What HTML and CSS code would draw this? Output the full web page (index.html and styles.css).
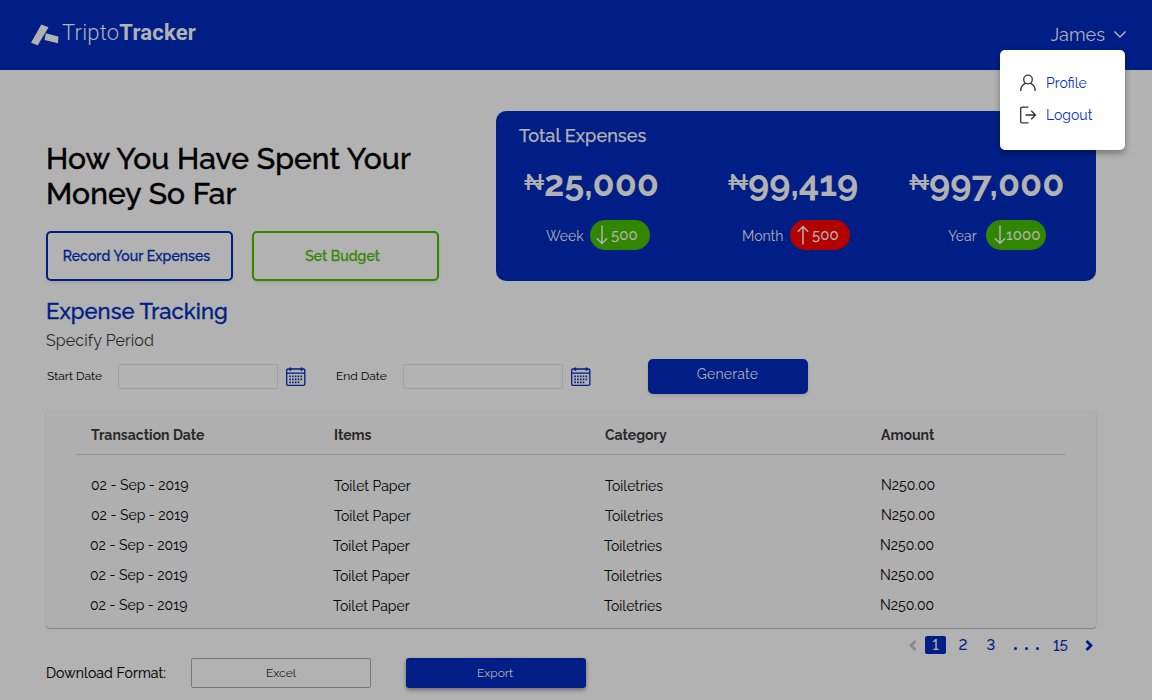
FILE: index.html
```html
<!DOCTYPE html>
<html lang="en">
<head>
<meta charset="utf-8">
<title>TriptoTracker</title>
<link rel="stylesheet" href="styles.css">
</head>
<body>
<svg class="defs" width="0" height="0" aria-hidden="true">
  <symbol id="calendar" viewBox="0 0 20 20">
    <path d="M.7 3.2Q.7 2 1.9 2H17.6Q18.8 2 18.8 3.2V17.2Q18.8 18.3 17.6 18.3H1.9Q.7 18.3 .7 17.2ZM.7 6.2H19" fill="none" stroke="currentColor" stroke-width="1.3"/>
    <path d="M4.3 .5V3.8M15.5 .5V3.8" stroke="currentColor" stroke-width="1.8"/>
    <path d="M3.3 9.4H16.8M3.3 12.4H16.8M3.3 15.4H14" stroke="currentColor" stroke-width="1.6" stroke-dasharray="1.6 1.2"/>
  </symbol>
  <symbol id="arrow" viewBox="0 0 12 20">
    <path d="M6 .5V18.5M.8 13.2L6 18.5L11.2 13.2" fill="none" stroke="currentColor" stroke-width="1.5"/>
  </symbol>
</svg>
<header class="topbar">
  <div class="brand">
    <svg class="mark" width="28" height="22" viewBox="0 0 28 22"><path d="M10.3 0.4L17.6 3.2L6.8 21.3L0 18.8ZM14.8 9.2L27.4 12.5L27 19.2L13.5 16Z" fill="currentColor"/></svg>
    <span class="name">Tripto<b>Tracker</b></span>
  </div>
  <div class="account">
    <span class="user">James</span>
    <svg width="14" height="9" viewBox="0 0 14 9"><path d="M1.5 1.5L7 7L12.5 1.5" fill="none" stroke="currentColor" stroke-width="1.5"/></svg>
    <nav class="menu">
      <a class="item"><svg width="18" height="18" viewBox="0 0 18 18" fill="none" stroke="currentColor" stroke-width="1.3"><circle cx="8" cy="5.5" r="4.3"/><path d="M.7 17C.7 12.5 3.3 9.7 5.8 9.3M15.3 17C15.3 12.5 12.7 9.7 10.2 9.3"/></svg><span>Profile</span></a>
      <a class="item"><svg width="18" height="18" viewBox="0 0 18 18" fill="none" stroke="currentColor" stroke-width="1.3"><path d="M8.5 1.2H2Q.7 1.2 .7 2.5V15.5Q.7 16.8 2 16.8H8.5M5.5 9H15.5M11.2 4.8L15.5 9L11.2 13.2"/></svg><span>Logout</span></a>
    </nav>
  </div>
</header>
<main class="page">
  <section class="hero">
    <div class="intro">
      <h1 class="headline">How You Have Spent Your<br>Money So Far</h1>
      <div class="actions">
        <button class="outline blue">Record Your Expenses</button>
        <button class="outline green">Set Budget</button>
      </div>
    </div>
    <div class="card">
      <h2 class="card-title">Total Expenses</h2>
      <div class="stats">
        <div class="stat week">
          <div class="amount"><span class="naira">₦</span>25,000</div>
          <div class="change"><span class="period">Week</span><span class="pill"><svg width="12" height="20"><use href="#arrow"/></svg>500</span></div>
        </div>
        <div class="stat month">
          <div class="amount"><span class="naira">₦</span>99,419</div>
          <div class="change"><span class="period">Month</span><span class="pill up"><svg width="12" height="20"><use href="#arrow"/></svg>500</span></div>
        </div>
        <div class="stat year">
          <div class="amount"><span class="naira">₦</span>997,000</div>
          <div class="change"><span class="period">Year</span><span class="pill wide"><svg width="12" height="20"><use href="#arrow"/></svg>1000</span></div>
        </div>
      </div>
    </div>
  </section>
  <h2 class="section-title">Expense Tracking</h2>
  <p class="subtitle">Specify Period</p>
  <form class="filters">
    <label class="label start">Start Date</label><input class="date"><svg class="cal" width="20" height="20"><use href="#calendar"/></svg>
    <label class="label end">End Date</label><input class="date"><svg class="cal" width="20" height="20"><use href="#calendar"/></svg>
    <button class="generate" type="button">Generate</button>
  </form>
  <section class="panel">
    <div class="row head"><span>Transaction Date</span><span>Items</span><span>Category</span><span>Amount</span></div>
    <div class="rows">
      <div class="row"><span>02 - Sep - 2019</span><span class="low">Toilet Paper</span><span class="low">Toiletries</span><span>N250.00</span></div>
      <div class="row"><span>02 - Sep - 2019</span><span class="low">Toilet Paper</span><span class="low">Toiletries</span><span>N250.00</span></div>
      <div class="row shift"><span>02 - Sep - 2019</span><span class="low">Toilet Paper</span><span class="low">Toiletries</span><span>N250.00</span></div>
      <div class="row shift"><span>02 - Sep - 2019</span><span class="low">Toilet Paper</span><span class="low">Toiletries</span><span>N250.00</span></div>
      <div class="row shift"><span>02 - Sep - 2019</span><span class="low">Toilet Paper</span><span class="low">Toiletries</span><span>N250.00</span></div>
    </div>
  </section>
  <nav class="pager">
    <svg class="prev" width="8" height="11" viewBox="0 0 8 11"><path d="M6.5 1L2 5.5L6.5 10" fill="none" stroke="currentColor" stroke-width="2.6"/></svg>
    <span class="current">1</span><span class="num">2</span><span class="num">3</span>
    <span class="dots"><i></i><i></i><i></i></span>
    <span class="last">15</span>
    <svg class="next" width="8" height="11" viewBox="0 0 8 11"><path d="M1.5 1L6 5.5L1.5 10" fill="none" stroke="currentColor" stroke-width="2.8"/></svg>
  </nav>
  <div class="download">
    <span class="dl-label">Download Format:</span>
    <button class="format">Excel</button>
    <button class="export">Export</button>
  </div>
</main>
</body>
</html>
```
FILE: styles.css
```css
* { box-sizing: border-box; }
body { margin: 0; background: #b2b2b2; color: #000; font-family: Raleway, Lato, sans-serif; font-variant-numeric: oldstyle-nums; height: 700px; overflow: hidden; white-space: nowrap; }
h1, h2, p { margin: 0; }
button { font-family: inherit; padding: 0; border: 0; background: none; }
svg { display: block; flex: none; }
.defs { position: absolute; }
.topbar { height: 70px; background: #001e86; color: #b2b2b2; display: flex; justify-content: space-between; padding: 0 25px 0 31px; }
.brand { display: flex; align-items: flex-start; padding-top: 20px; }
.mark { margin-top: 4px; }
.name { font: 300 22px/26px Roboto, sans-serif; margin-left: 3px; letter-spacing: .2px; }
.name b { font-weight: 700; letter-spacing: .2px; }
.account { position: relative; display: flex; align-items: center; height: 68px; gap: 8px; }
.user { font-size: 18px; letter-spacing: .1px; }
.menu { position: absolute; right: 2px; top: 50px; width: 125px; height: 100px; padding: 17px 20px; background: #fff; border-radius: 5px; box-shadow: 0 3px 6px rgba(0,0,0,.35); color: #333; z-index: 2; }
.item { display: flex; align-items: center; gap: 8px; height: 32px; font-size: 14px; }
.item span { color: #0030c8; }
.page { padding: 41px 56px 0 46px; }
.hero { display: flex; justify-content: space-between; height: 170px; }
.intro { display: flex; flex-direction: column; justify-content: space-between; padding-top: 30px; }
.headline { font-size: 30px; line-height: 35px; font-weight: 500; letter-spacing: .11px; -webkit-text-stroke: .45px currentColor; }
.actions { display: flex; gap: 19px; }
.outline { width: 187px; height: 50px; border: 2px solid currentColor; border-radius: 5px; font-size: 14px; font-weight: 500; letter-spacing: .08px; -webkit-text-stroke: .3px currentColor; box-shadow: 0 2px 3px rgba(0,0,0,.08); padding-right: 6px; }
.blue { color: #001e86; }
.green { color: #318600; }
.card { width: 600px; background: #001e86; color: #b2b2b2; border-radius: 10px; }
.card-title { font-size: 18px; line-height: 22px; font-weight: 500; letter-spacing: .1px; -webkit-text-stroke: .25px currentColor; padding: 14px 0 0 23px; }
.stats { display: grid; grid-template-columns: 204px 181px 1fr; padding: 14px 0 0 28px; }
.amount { font-size: 36px; font-weight: 700; line-height: 44px; height: 44px; display: flex; align-items: center; }
.naira { font-family: Roboto, sans-serif; font-size: 22px; font-weight: 400; width: 20px; transform: scaleX(1.17); transform-origin: 0 50%; }
.change { display: flex; align-items: center; height: 30px; margin-top: 15px; font-size: 14px; }
.period { font-weight: 400; width: 44px; padding-top: 2px; }
.week .change { padding-left: 22px; }
.month .change { padding-left: 14px; }
.month .period { width: 48px; }
.year .change { padding-left: 39px; }
.year .period { width: 38px; }
.pill { width: 60px; height: 30px; border-radius: 15px; background: #318600; display: flex; align-items: center; padding-left: 6px; gap: 3px; font-size: 15px; font-weight: 500; }
.up { background: #b30000; padding-left: 7px; }
.up svg { transform: rotate(180deg); }
.wide { padding-left: 8px; gap: 0; }
.section-title { margin-top: 17px; font-size: 22px; line-height: 26px; font-weight: 500; color: #001e86; letter-spacing: .07px; -webkit-text-stroke: .35px currentColor; }
.subtitle { margin-top: 7px; font-size: 16px; line-height: 20px; color: #2a2a2a; letter-spacing: .1px; }
.filters { display: flex; align-items: center; height: 35px; margin-top: 8px; }
.label { font-size: 12px; padding-bottom: 1px; }
.start { width: 72px; padding-left: 1px; }
.end { width: 67px; margin-left: 30px; }
.date { width: 160px; height: 25px; border: 1px solid #9f9f9f; border-radius: 2px; background: transparent; padding: 0; }
.cal { margin: 0 .5px 0 7.5px; color: #001e86; }
.generate { width: 160px; height: 35px; margin-left: 57px; border-radius: 5px; background: #001e86; color: #b2b2b2; font-size: 14px; letter-spacing: .2px; padding-bottom: 5px; padding-right: 1px; box-shadow: 0 2px 3px rgba(0,0,0,.1); }
.panel { height: 218px; margin-top: 16px; background: #afafaf; border-radius: 4px; box-shadow: 0 1px 1px rgba(0,0,0,.25), 0 0 1px rgba(0,0,0,.12); padding: 10px 30px 0; }
.row { display: grid; grid-template-columns: 243px 271px 276px 1fr; padding-left: 15px; font-size: 14px; height: 30px; align-items: center; }
.low { padding-top: 2px; }
.head { font-weight: 700; color: #2a2a2a; height: 35px; padding-bottom: 5px; border-bottom: 1px solid #959595; }
.rows { padding-top: 15px; }
.shift { padding-left: 14px; }
.pager { display: flex; align-items: center; justify-content: flex-end; height: 18px; margin-top: 8px; padding-right: 3px; color: #001e86; font-size: 15px; font-weight: 500; font-variant-numeric: lining-nums; }
.prev { color: #888; margin-right: 8px; }
.current { width: 21px; height: 18px; line-height: 18px; text-align: center; background: #001e86; color: #b2b2b2; border-radius: 2px; }
.num { width: 9px; margin-left: 12.5px; }
.num + .num { margin-left: 19px; }
.dots { display: flex; gap: 8px; margin: 6px 14px 0 18.5px; }
.dots i { width: 3px; height: 3px; border-radius: 50%; background: currentColor; }
.last { margin-right: 17px; padding-top: 1px; }
.next { margin-top: 1px; }
.download { display: flex; align-items: center; height: 30px; margin-top: 4px; }
.dl-label { width: 145px; font-size: 14px; letter-spacing: .1px; -webkit-text-stroke: .15px currentColor; }
.format { width: 180px; height: 30px; border: 1px solid #777; border-radius: 2px; font-size: 12px; color: #222; }
.export { width: 180px; height: 30px; margin-left: 35px; border-radius: 3px; background: #001e86; color: #b2b2b2; font-size: 12px; padding-right: 2px; box-shadow: 0 2px 4px rgba(0,0,0,.4); }
```
